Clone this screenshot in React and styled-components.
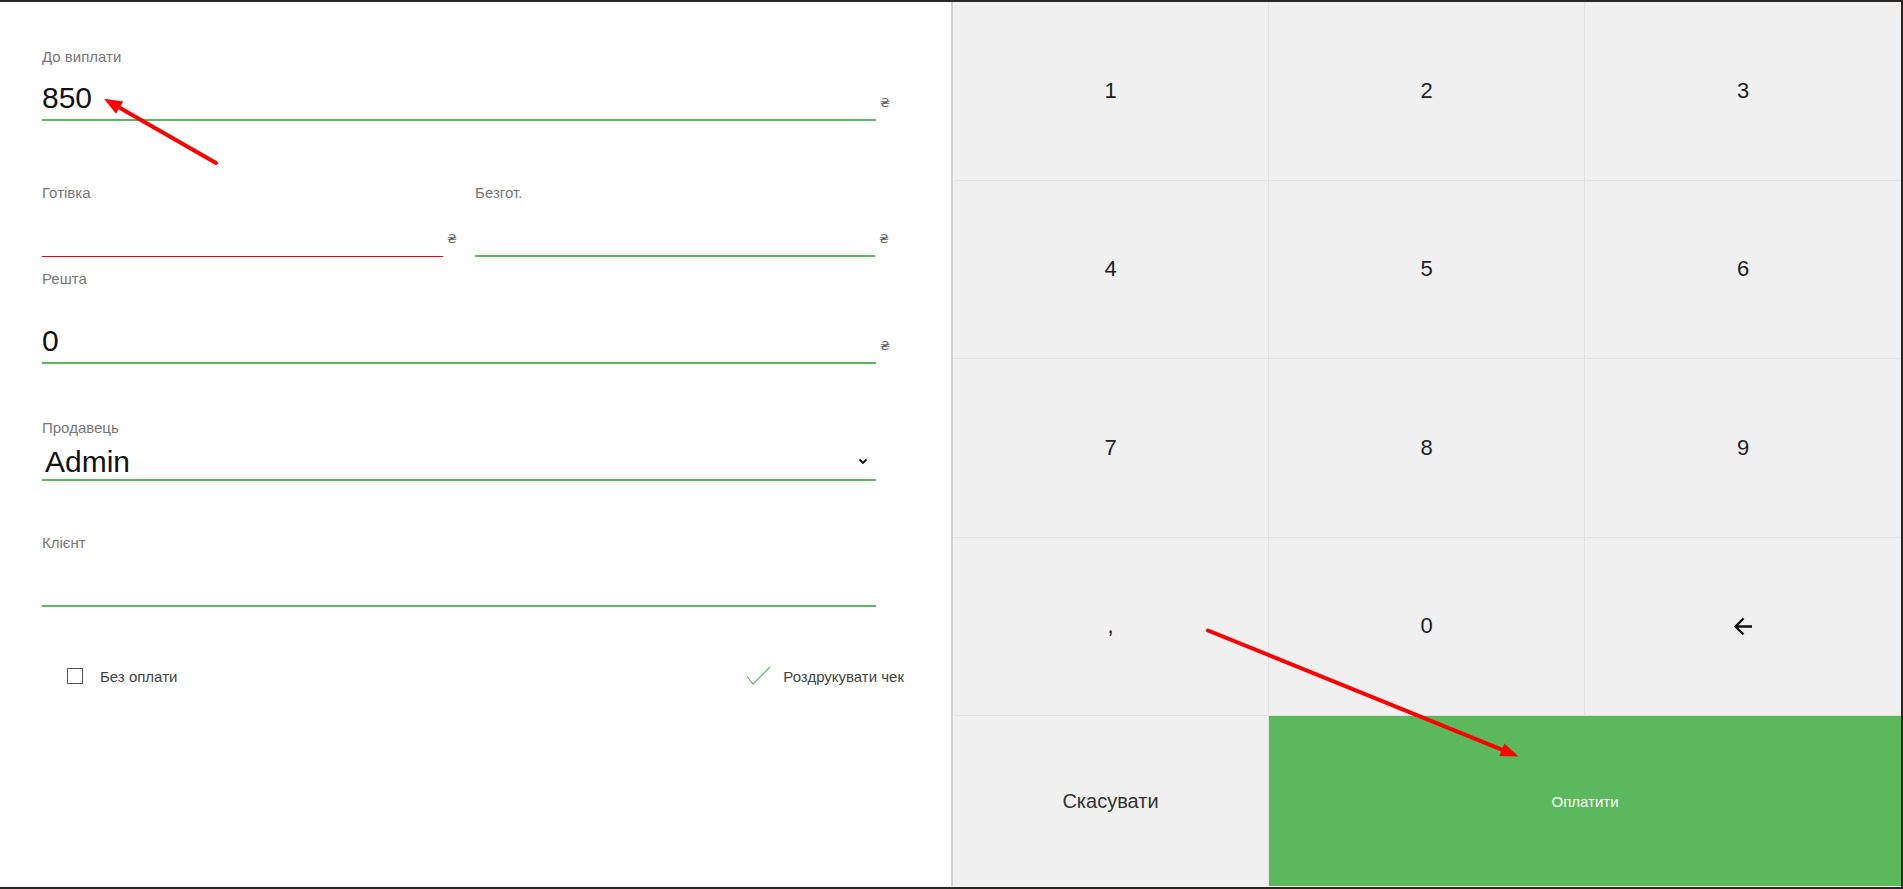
import React from "react";
import styled, { createGlobalStyle } from "styled-components";

const GlobalStyle = createGlobalStyle`
  html, body {
    margin: 0;
    padding: 0;
    background: #2a2623;
    overflow: hidden;
  }
  * {
    box-sizing: border-box;
  }
`;

const green = "#5cb85c";
const font = `"Liberation Sans", Arial, "DejaVu Sans", sans-serif`;

export default function App() {
  const keys = ["1", "2", "3", "4", "5", "6", "7", "8", "9", ",", "0"];

  return (
    <Root>
      <GlobalStyle />
      <Frame>
        <FormPanel>
          <Field>
            <Label>До виплати</Label>
            <InputRow>
              <AmountInput defaultValue="850" $width={834} />
              <Currency>₴</Currency>
            </InputRow>
          </Field>

          <HalfRow $top={63}>
            <Field>
              <Label>Готівка</Label>
              <InputRow>
                <AmountInput $width={401} $invalid />
                <Currency>₴</Currency>
              </InputRow>
            </Field>
            <Field>
              <Label>Безгот.</Label>
              <InputRow>
                <AmountInput $width={400} />
                <Currency>₴</Currency>
              </InputRow>
            </Field>
          </HalfRow>

          <Field $top={13}>
            <Label $gap={33}>Решта</Label>
            <InputRow>
              <AmountInput defaultValue="0" $width={834} />
              <Currency>₴</Currency>
            </InputRow>
          </Field>

          <Field $top={55}>
            <Label $gap={8}>Продавець</Label>
            <SelectBox>
              <span>Admin</span>
              <svg width="10" height="7" viewBox="0 0 10 7">
                <path d="M1.5 1.5 L5 5 L8.5 1.5" fill="none" stroke="#111" strokeWidth="1.8" />
              </svg>
            </SelectBox>
          </Field>

          <Field $top={53}>
            <Label>Клієнт</Label>
            <AmountInput $width={834} />
          </Field>

          <OptionsRow>
            <Option>
              <Box />
              <span>Без оплати</span>
            </Option>
            <Option>
              <svg width="26" height="20" viewBox="0 0 26 20">
                <path d="M1 10.5 L7 18 L24 1" fill="none" stroke={green} strokeWidth="1.2" />
              </svg>
              <span>Роздрукувати чек</span>
            </Option>
          </OptionsRow>
        </FormPanel>

        <Keypad>
          {keys.map((k, i) => (
            <Key key={k} $last={i % 3 === 2}>
              {k}
            </Key>
          ))}
          <Key $last>
            <svg width="20" height="19" viewBox="0 0 20 19">
              <path d="M10.5 1.5 L2.5 9.5 L10.5 17.5 M2.5 9.5 H19" fill="none" stroke="#111" strokeWidth="2.4" />
            </svg>
          </Key>
          <CancelKey>Скасувати</CancelKey>
          <PayKey>Оплатити</PayKey>
        </Keypad>
      </Frame>

      <Annotations width="1903" height="889" viewBox="0 0 1903 889">
        <line x1="216" y1="163" x2="119.6" y2="107.7" stroke="#f00" strokeWidth="4" strokeLinecap="round" />
        <polygon points="104,98.7 123.2,101.6 116,113.8" fill="#f00" />
        <line x1="1208" y1="630.5" x2="1501.8" y2="749.7" stroke="#f00" strokeWidth="4" strokeLinecap="round" />
        <polygon points="1518.5,756.5 1499.3,756 1504.4,743.4" fill="#f00" />
      </Annotations>
    </Root>
  );
}

// styles
const Root = styled.div`
  position: relative;
  width: 1903px;
  height: 889px;
  padding-top: 2px;
  font-family: ${font};
`;

const Frame = styled.div`
  display: flex;
  width: 1901px;
  height: 885px;
  border-bottom: 1px solid #f4f4f4;
`;

const FormPanel = styled.div`
  width: 951px;
  flex-shrink: 0;
  background: #fff;
  padding: 46px 0 0 42px;
  display: flex;
  flex-direction: column;
  align-items: flex-start;
`;

const Field = styled.div`
  display: flex;
  flex-direction: column;
  margin-top: ${({ $top }) => $top || 0}px;
`;

const HalfRow = styled.div`
  display: flex;
  gap: 18px;
  margin-top: ${({ $top }) => $top || 0}px;
`;

const Label = styled.label`
  font-size: 15px;
  line-height: 17px;
  color: #777;
  margin-bottom: ${({ $gap }) => ($gap === undefined ? 12 : $gap)}px;
`;

const InputRow = styled.div`
  display: flex;
  align-items: flex-end;
`;

const AmountInput = styled.input`
  width: ${({ $width }) => $width}px;
  height: 44px;
  padding: 0;
  border: none;
  border-bottom: ${({ $invalid }) => ($invalid ? "1px solid #ff0000" : `2px solid ${green}`)};
  background: transparent;
  outline: none;
  font-family: ${font};
  font-size: 30px;
  color: #111;
`;

const Currency = styled.span`
  margin: 0 0 11px 4px;
  font-family: "DejaVu Sans", sans-serif;
  font-size: 13px;
  line-height: 14px;
  color: #666;
`;

const SelectBox = styled.div`
  width: 834px;
  height: 37px;
  display: flex;
  align-items: center;
  justify-content: space-between;
  padding: 0 8px 0 3px;
  border-bottom: 2px solid ${green};
  font-size: 30px;
  line-height: 35px;
  color: #111;
`;

const OptionsRow = styled.div`
  width: 837px;
  margin: 59px 0 0 25px;
  display: flex;
  justify-content: space-between;
  align-items: center;
`;

const Option = styled.div`
  display: flex;
  align-items: center;
  gap: 11px;
  font-size: 15px;
  color: #444;

  span {
    line-height: 17px;
  }
`;

const Box = styled.div`
  width: 16px;
  height: 16px;
  border: 1.4px solid #555;
  margin-right: 6px;
`;

const Keypad = styled.div`
  width: 950px;
  flex-shrink: 0;
  border-left: 2px solid #d2d2d2;
  background: #f0f0f0;
  display: grid;
  grid-template-columns: repeat(3, 1fr);
  grid-template-rows: repeat(4, 178.5px) 1fr;
  overflow: hidden;
`;

const Key = styled.div`
  display: flex;
  align-items: center;
  justify-content: center;
  border-bottom: 1px solid #e2e2e2;
  border-right: ${({ $last }) => ($last ? "none" : "1px solid #e2e2e2")};
  font-size: 22px;
  color: #222;
`;

const CancelKey = styled(Key)`
  border-bottom: none;
  font-size: 20px;
  color: #333;
`;

const PayKey = styled.div`
  grid-column: span 2;
  display: flex;
  align-items: center;
  justify-content: center;
  background: ${green};
  font-size: 15px;
  color: #fff;
`;

const Annotations = styled.svg`
  position: absolute;
  top: 0;
  left: 0;
  pointer-events: none;
`;
